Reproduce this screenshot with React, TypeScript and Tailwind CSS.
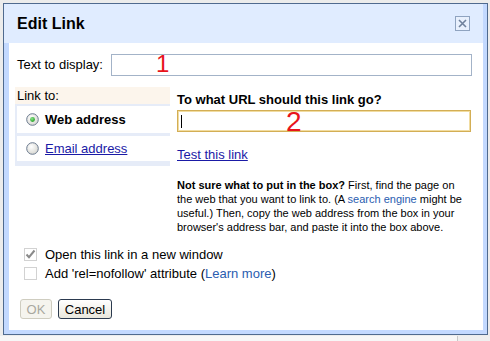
import { useState } from 'react';

// Radio circle drawn like the old XP-style control
const Radio = ({ checked }: { checked: boolean }) => (
  <svg width="13" height="13" viewBox="0 0 13 13" className="shrink-0">
    <defs>
      <radialGradient id="rg" cx="40%" cy="35%" r="70%">
        <stop offset="0%" stopColor="#ffffff" />
        <stop offset="100%" stopColor="#d6d6d0" />
      </radialGradient>
      <radialGradient id="dot" cx="40%" cy="35%" r="70%">
        <stop offset="0%" stopColor="#8ee68e" />
        <stop offset="100%" stopColor="#1c9b1c" />
      </radialGradient>
    </defs>
    <circle cx="6.5" cy="6.5" r="5.8" fill="url(#rg)" stroke="#6b7a8f" strokeWidth="1" />
    {checked && <circle cx="6.5" cy="6.5" r="2.4" fill="url(#dot)" />}
  </svg>
);

const Checkbox = ({ checked }: { checked: boolean }) => (
  <div className="w-[13px] h-[13px] border border-[#d2d2d2] bg-white flex items-center justify-center shrink-0">
    {checked && (
      <svg width="11" height="11" viewBox="0 0 11 11">
        <path d="M1.5 5.5 L4 8.2 L9.5 1.5" fill="none" stroke="#8a8a8a" strokeWidth="2" />
      </svg>
    )}
  </div>
);

const App = () => {
  const [target, setTarget] = useState<'web' | 'email'>('web');
  const [newWindow, setNewWindow] = useState(true);

  return (
    <div className="relative w-[490px] h-[341px] overflow-hidden bg-[#ececec] font-['Liberation_Sans',Arial,sans-serif] text-black">
      {/* Dialog */}
      <div className="ml-[3px] mt-[3px] w-[485px] h-[332px] border border-[#4f6a8f] bg-[#c3d9ff] flex flex-col">
        {/* Title bar */}
        <div className="h-[39px] bg-[#e0ecff] flex items-center justify-between pl-[13px] pr-[13px] mr-[4px]">
          <span className="text-[16px] font-bold leading-none mt-[1px]">Edit Link</span>
          <button className="w-[15px] h-[15px] border border-[#8fa3c0] bg-[#e8f0fd] flex items-center justify-center">
            <svg width="9" height="9" viewBox="0 0 9 9">
              <path d="M1 1 L8 8 M8 1 L1 8" stroke="#6f819c" strokeWidth="1.6" />
            </svg>
          </button>
        </div>

        {/* Body */}
        <div className="flex-1 bg-white ml-[5px] mr-[4px] mb-[4px] pl-[8px] text-[13px]">
          <div className="flex items-center mt-[11px] h-[22px]">
            <span>Text to display:</span>
            <input className="ml-[8px] w-[361px] h-[22px] border border-[#a3b3c8] outline-none px-1" />
          </div>

          <div className="flex items-start mt-[11px]">
            {/* Link to tabs */}
            <div className="w-[155px] -ml-[2px]">
              <div className="h-[17px] bg-[#fcf5ec] pl-[2px] leading-[17px]">Link to:</div>
              <div className="bg-[#e6ecf8] pl-[2px] pt-[2px] pb-[5px] flex flex-col gap-[3px]">
                <div
                  className="h-[27px] bg-white flex items-center pl-[9px] gap-[6px] cursor-pointer"
                  onClick={() => setTarget('web')}
                >
                  <Radio checked={target === 'web'} />
                  <span className={target === 'web' ? 'font-bold' : 'underline text-[#1a1aa6]'}>Web address</span>
                </div>
                <div
                  className="h-[25px] bg-white flex items-center pl-[9px] gap-[6px] cursor-pointer"
                  onClick={() => setTarget('email')}
                >
                  <Radio checked={target === 'email'} />
                  <span className={target === 'email' ? 'font-bold' : 'underline text-[#1a1aa6]'}>Email address</span>
                </div>
              </div>
            </div>

            {/* URL side */}
            <div className="ml-[7px] mt-[5px] w-[294px]">
              <div className="font-bold leading-4">To what URL should this link go?</div>
              <div className="mt-[2px] h-[22px] border border-[#d3ae55] shadow-[inset_0_0_0_1px_#f1dca0] flex items-center pl-[3px]">
                <div className="w-px h-[13px] bg-black" />
              </div>
              <a className="block mt-[15px] leading-4 underline text-[#1a1aa6] w-fit">Test this link</a>
              <p className="mt-[15px] text-[11px] leading-[14px]">
                <b>Not sure what to put in the box?</b> First, find the page on
                <br />
                the web that you want to link to. (A <span className="text-[#2a5db0]">search engine</span> might be
                <br />
                useful.) Then, copy the web address from the box in your
                <br />
                browser's address bar, and paste it into the box above.
              </p>
            </div>
          </div>

          <div className="mt-[11px] ml-[7px]">
            <label className="h-[19px] flex items-center gap-[8px]" onClick={() => setNewWindow(!newWindow)}>
              <Checkbox checked={newWindow} />
              <span>Open this link in a new window</span>
            </label>
            <label className="h-[19px] flex items-center gap-[8px]">
              <Checkbox checked={false} />
              <span>
                Add 'rel=nofollow' attribute (<span className="text-[#2a5db0]">Learn more</span>)
              </span>
            </label>
          </div>

          <div className="mt-[16px] ml-[3px] flex gap-[6px]">
            <button className="w-[32px] h-[20px] rounded-[3px] border border-[#cfcdc0] bg-[#f5f4ee] text-[#a9a89f] leading-none">
              OK
            </button>
            <button className="w-[54px] h-[20px] rounded-[3px] border border-[#2b3a4f] bg-gradient-to-b from-white to-[#e9e7dc] leading-none">
              Cancel
            </button>
          </div>
        </div>
      </div>

      {/* Bottom window strip */}
      <div className="flex h-[6px] mt-[1px]">
        <div className="w-[457px] bg-[#f7f7f7]" />
        <div className="w-px bg-[#c8c8c8]" />
        <div className="flex-1 bg-[#efefef]" />
      </div>

      {/* Red annotation numbers */}
      <span className="absolute left-[156px] top-[52px] text-[24px] leading-none text-[#e8141b]">1</span>
      <span className="absolute left-[286px] top-[108px] text-[28px] leading-none text-[#e8141b]">2</span>
    </div>
  );
};

export default App;
